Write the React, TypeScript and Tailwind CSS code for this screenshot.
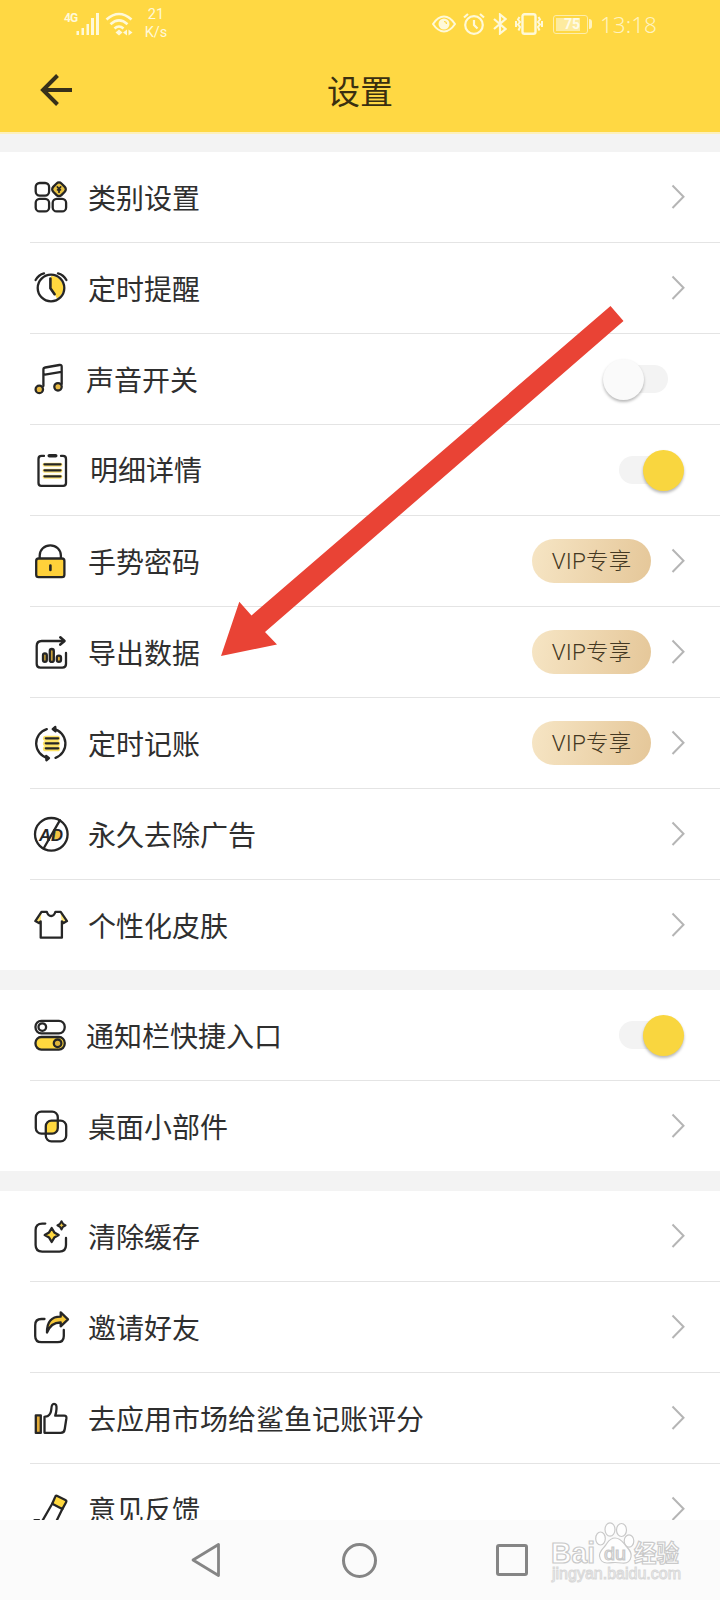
import React from 'react';

interface IconProps {
  children: React.ReactNode;
}

// 設定行の左側に置くアイコンの枠
const Icon = ({ children }: IconProps) => {
  return (
    <svg
      viewBox="0 0 40 40"
      className="w-10 h-10 shrink-0"
      fill="none"
      stroke="#262626"
      strokeWidth="2.3"
      strokeLinecap="round"
      strokeLinejoin="round"
    >
      {children}
    </svg>
  );
};

const CategoryIcon = () => (
  <Icon>
    <rect x="5.7" y="6" width="13.4" height="12.6" rx="4" />
    <rect x="5.7" y="21.8" width="13.4" height="12.6" rx="4" />
    <rect x="22.7" y="21.8" width="13.4" height="12.6" rx="4" />
    <rect
      x="23.2"
      y="6.5"
      width="11.6"
      height="11.6"
      rx="3.4"
      fill="#e9c343"
      transform="rotate(45 29 12.3)"
    />
    <path d="M27.4 10l1.6 1.8 1.6-1.8M29 11.8v3.4M27.6 12.8h2.8" strokeWidth="1.8" />
  </Icon>
);

const AlarmIcon = () => (
  <Icon>
    <path d="M21 8a12 12 0 0 1 6 22.6L21 20z" fill="#ffd83f" stroke="none" />
    <circle cx="21" cy="20" r="13.3" />
    <path d="M20.4 10.6v9.6l4.2 6" strokeWidth="2.6" />
    <path d="M5.6 12c2-3.6 4.8-5.8 8.4-6.7M28 5.3c3.6.9 6.4 3.1 8.4 6.7" />
  </Icon>
);

const MusicIcon = () => (
  <Icon>
    <path d="M13.4 27V10.6q0-1.8 1.8-2.1l14.2-2.5q2.3-.4 2.3 1.7V25M13.4 15.8l18-3" />
    <circle cx="9.3" cy="30.4" r="3.7" fill="#e9bb45" />
    <circle cx="28" cy="27.8" r="3.7" fill="#e9bb45" />
  </Icon>
);

const DetailIcon = () => (
  <Icon>
    <path d="M14.5 14.8h16M14.5 20.8h16M14.5 26.8h16" stroke="#ffe477" strokeWidth="4" />
    <path d="M14.5 14.3h16M14.5 20.3h16M14.5 26.3h16" />
    <path d="M14 5.9h-2.5Q8.5 5.9 8.5 8.9V33.1q0 2.8 2.8 2.8H33.2q2.8 0 2.8-2.8V8.9q0-3-3-3H31" />
    <path d="M19.3 5.7h6.4" strokeWidth="3.6" />
  </Icon>
);

const LockIcon = () => (
  <Icon>
    <path d="M9.7 17.5V14.5a10.6 10.2 0 0 1 21.2 0V17.5" />
    <rect x="6.2" y="17.5" width="28.2" height="18.6" rx="2.4" fill="#ffd13a" />
    <path d="M20.4 24.5v4.5" strokeWidth="2.6" />
  </Icon>
);

const ExportIcon = () => (
  <Icon>
    <path d="M36 21v11q0 3.6-3.6 3.6H10.3Q6.7 35.6 6.7 32V14q0-5 5-5H34" />
    <path d="M30.3 5.3l4.2 3.7-4.2 3.6" strokeWidth="2.6" />
    <rect x="13" y="21.3" width="3.8" height="8.6" rx="1.9" fill="#c89f38" />
    <rect x="19.8" y="17" width="4" height="12.9" rx="2" fill="#c89f38" />
    <rect x="26.8" y="23.6" width="4.2" height="6.3" rx="2.1" fill="#e0b040" />
  </Icon>
);

const AutoRecordIcon = () => (
  <Icon>
    <path d="M15.5 15.3h12M15.5 20.5h12M15.5 25.7h12" stroke="#ffe466" strokeWidth="5.2" />
    <path d="M15.8 15.3h12.4M15.8 20.3h12.4M15.8 25.3h12.4" />
    <path d="M16.8 6.1A15 15 0 0 0 17.5 35M25.5 34.8A15 15 0 0 0 23.5 6" />
    <path d="M25.3 4l-2.6 2.1 2.8 2.2zM16.2 33l2.8 2.1-2.6 2.2z" fill="#262626" />
  </Icon>
);

const NoAdIcon = () => (
  <Icon>
    <path d="M25.5 16h3.500q2.5 1 1.8 4.500-.7 4.500-4 4.500h-3.500z" fill="#f4c542" stroke="none" />
    <circle cx="21.3" cy="20.3" r="16.3" />
    <text
      x="9"
      y="26.6"
      textLength="24"
      lengthAdjust="spacingAndGlyphs"
      fill="#262626"
      stroke="none"
      className="font-['Liberation_Sans'] text-[17px] font-bold italic"
    >
      AD
    </text>
    <path d="M27.2 17.3h1.600q1.500.5 1 3.200-.6 3.200-2.600 3.400h-1.400z" fill="#f4c542" stroke="none" />
    <path d="M30 6.200L13.600 34.500" />
  </Icon>
);

const ShirtIcon = () => (
  <Icon>
    <path d="M11.5 7.5L6.5 16l4 2zM30.5 7.5L36 16l-4 2z" fill="#ffe477" stroke="none" />
    <path d="M11.5 6.8h5.3q1.2 4.2 4.3 4.2t4.3-4.2h5.3l6.3 9.3-3.4 2-1.700-1.700V32.700H10.700V16.400L8.900 18.100 5.300 16.100z" />
  </Icon>
);

const SwitchIcon = () => (
  <Icon>
    <rect x="5.5" y="5.8" width="29.2" height="12.6" rx="5.8" />
    <circle cx="12.3" cy="12.1" r="3.8" />
    <rect x="5.5" y="22" width="29.2" height="12.6" rx="5.8" fill="#ffd83f" />
    <circle cx="27.6" cy="28.3" r="3.8" fill="#dfb43c" />
  </Icon>
);

const WidgetIcon = () => (
  <Icon>
    <path d="M22 14.600h5.800v7.400q0 5.600-5.600 5.600h-6.400v-7q0-6 6.200-6z" fill="#ffd83f" stroke="none" />
    <rect x="5.8" y="5.600" width="22" height="22" rx="5.600" />
    <rect x="15.8" y="14.600" width="20.4" height="20.8" rx="5.600" />
  </Icon>
);

const CleanIcon = () => (
  <Icon>
    <path d="M15.3 7.6h-3q-6.700 0-6.700 6.500V29q0 6.600 6.600 6.600H29.500q6.500 0 6.500-6.600V22" />
    <path d="M21.7 12l2.600 4.400 4.400 2.600-4.400 2.600-2.600 4.400-2.600-4.400-4.400-2.600 4.400-2.600z" fill="#ffd83f" />
    <path d="M31.5 5.200l1.500 2.600 2.600 1.500-2.600 1.500-1.500 2.600-1.500-2.600-2.600-1.500 2.600-1.500z" fill="#e9c343" strokeWidth="2" />
  </Icon>
);

const ShareIcon = () => (
  <Icon>
    <path d="M14.500 12h-3.100q-6.200 0-6.200 6.200V29q0 6.200 6.200 6.200H27.600q6.200 0 6.200-6.200V23" />
    <path d="M17 25.500Q16.800 9.500 30.700 9.700V5.300l7.300 7-7.300 7V15.500Q21 15.300 17 25.500z" fill="#f6c83a" />
  </Icon>
);

const LikeIcon = () => (
  <Icon>
    <rect x="5.800" y="17.300" width="5" height="17.600" fill="#e3ac39" />
    <path d="M14.500 34.800V18.800l3-.6q3.500-2.200 3.800-7 .2-5.400 2.700-5.400 2.900 0 2.500 5.200-.2 3.600-1.300 6.600h9q2.500 0 2.200 2.600l-1.700 11q-.5 3.600-4 3.600z" />
  </Icon>
);

const FeedbackIcon = () => (
  <Icon>
    <path d="M26.800 6.700l8.600 4.300q1.500.8.700 2.200l-3.800 6.900-10.100-5.300 3.200-7.400q.4-1.100 1.400-.7z" fill="#ffd83f" />
    <path d="M22.200 14.800L12 32.500M32.300 20.100L25.500 34" />
    <path d="M4.500 31.200h4.500" />
  </Icon>
);

const Chevron = () => {
  return (
    <svg
      viewBox="0 0 14 26"
      className="w-[14px] h-[26px] shrink-0"
      fill="none"
      stroke="#b5b5b5"
      strokeWidth="2"
    >
      <path d="M1.5 1.500L12.500 12.700L1.500 24" />
    </svg>
  );
};

const Toggle = ({ on }: { on: boolean }) => {
  if (on) {
    return (
      <div className="flex items-center w-[65px] h-10 mr-px">
        <div className="w-[45px] h-7 rounded-l-full bg-[#f3f3f3]" />
        <div className="-ml-[21px] w-[41px] h-[41px] shrink-0 rounded-full bg-[#f9d63f] shadow-[0_2px_3px_rgba(0,0,0,0.28)]" />
      </div>
    );
  }
  return (
    <div className="flex items-center w-[65px] h-10 mr-[17px]">
      <div className="z-1 w-[41px] h-[41px] shrink-0 rounded-full bg-[#fafafa] shadow-[0_2px_3px_rgba(0,0,0,0.28)]" />
      <div className="-ml-[21px] w-[45px] h-7 rounded-r-full bg-[#f3f3f3]" />
    </div>
  );
};

const VipBadge = () => {
  return (
    <div className="flex items-center justify-center w-[119px] h-11 mr-5 rounded-full bg-linear-100 from-[#f6e5c4] to-[#e5c799] font-[Roboto,'Noto_Sans_CJK_SC',sans-serif] font-light text-[22.5px] leading-none tracking-[0.2px] text-[#443822]">
      VIP专享
    </div>
  );
};

interface SettingItem {
  label: string;
  icon: React.ReactNode;
  vip?: boolean;
  toggle?: boolean;
  // アイコンと文字の間隔が違う行用
  gap?: string;
}

const sections: SettingItem[][] = [
  [
    { label: '类别设置', icon: <CategoryIcon /> },
    { label: '定时提醒', icon: <AlarmIcon /> },
    { label: '声音开关', icon: <MusicIcon />, toggle: false, gap: 'pl-4' },
    { label: '明细详情', icon: <DetailIcon />, toggle: true, gap: 'pl-5 pb-0.5' },
    { label: '手势密码', icon: <LockIcon />, vip: true },
    { label: '导出数据', icon: <ExportIcon />, vip: true },
    { label: '定时记账', icon: <AutoRecordIcon />, vip: true },
    { label: '永久去除广告', icon: <NoAdIcon /> },
    { label: '个性化皮肤', icon: <ShirtIcon /> },
  ],
  [
    { label: '通知栏快捷入口', icon: <SwitchIcon />, toggle: true, gap: 'pl-4' },
    { label: '桌面小部件', icon: <WidgetIcon /> },
  ],
  [
    { label: '清除缓存', icon: <CleanIcon /> },
    { label: '邀请好友', icon: <ShareIcon /> },
    { label: '去应用市场给鲨鱼记账评分', icon: <LikeIcon /> },
    { label: '意见反馈', icon: <FeedbackIcon /> },
  ],
];

const SettingRow = ({ item }: { item: SettingItem }) => {
  return (
    <div className="flex items-center box-content h-[90px] ml-[30px] pr-[35px] border-b border-[#e4e4e4] last:border-b-0">
      {item.icon}
      <span
        className={`flex-1 text-[28px] leading-10 text-[#2f2f2f] whitespace-nowrap ${item.gap ?? 'pl-[18px]'}`}
      >
        {item.label}
      </span>
      {item.vip && <VipBadge />}
      {item.toggle === undefined ? <Chevron /> : <Toggle on={item.toggle} />}
    </div>
  );
};

const StatusBar = () => {
  return (
    <div className="flex items-center h-12 pl-16 pr-[65px] text-[#fff9d8]">
      <span className="self-start mt-[11px] w-3 font-[Roboto,sans-serif] text-[12px] leading-[14px] font-bold tracking-[-0.8px]">
        4G
      </span>
      <svg viewBox="0 0 24 22" className="w-6 h-[22px]" fill="currentColor">
        <path d="M.5 18H3v4H.5zM5.500 15H8v7H5.500zM10.500 11H13v11h-2.500zM15 5h3v17h-3zM20 0h3v22h-3z" />
      </svg>
      <svg
        viewBox="0 0 28 24"
        className="w-7 h-6 ml-[5px]"
        fill="none"
        stroke="currentColor"
        strokeWidth="2.6"
      >
        <path d="M1.500 7.500Q14-3.500 26.500 7.500M5.500 12.200Q14 4.500 22.500 12.200M9.500 16.500Q14 12.500 18.500 16.500" />
        <path d="M14 17.500l3.500 3-3.500 3-3.500-3zM22 17.500v6l-4-3zM23.500 17.500v6l4-3z" fill="currentColor" stroke="none" />
      </svg>
      <div className="w-[26px] ml-2.5 text-center font-[Roboto,sans-serif] text-[14.5px] leading-[18px]">
        <div>21</div>
        <div>K/s</div>
      </div>
      <div className="flex items-center ml-auto">
        <svg viewBox="0 0 24 20" className="w-6 h-5" fill="none" stroke="currentColor" strokeWidth="2">
          <path d="M1 10Q6 2.500 12 2.500T23 10Q18 17.500 12 17.500T1 10z" />
          <circle cx="12" cy="10" r="5.500" fill="currentColor" stroke="none" />
          <path d="M12 7.500a2.500 2.500 0 0 1 2.500 2.500" stroke="#ffd843" strokeWidth="1.2" />
        </svg>
        <svg viewBox="0 0 22 22" className="w-[22px] h-[22px] ml-[7px]" fill="none" stroke="currentColor" strokeWidth="2.2">
          <circle cx="11" cy="12" r="8.800" />
          <path d="M11 7v5l3.500 3.500M1 4.500l4-3.500M21 4.500L17 1" />
        </svg>
        <svg viewBox="0 0 14 22" className="w-3.5 h-[22px] ml-2" fill="none" stroke="currentColor" strokeWidth="2.2">
          <path d="M1 6l11.500 10L7 20.500v-19L12.500 6 1 16" />
        </svg>
        <svg viewBox="0 0 28 22" className="w-7 h-[22px] ml-2" fill="none" stroke="currentColor" strokeWidth="2">
          <rect x="7.500" y="1.200" width="13" height="19.600" rx="2" strokeWidth="2.400" />
          <path d="M4.500 4L3 6.500l2 2.500-2 2.500 2 2.500-1.500 3.500M1 8v6M23.500 4L25 6.500 23 9l2 2.500-2 2.500 1.500 3.500M27 8v6" />
        </svg>
        <div className="flex items-center w-[35px] h-[19px] ml-[10px] p-[2px] border border-[#fdedaa] rounded-[3px]">
          <div className="flex items-center justify-center w-[24px] h-full pl-2 bg-[#fdeb9f] font-[Roboto,sans-serif] text-[14px] leading-none font-bold text-[#fffbe6]">
            75
          </div>
        </div>
        <div className="w-[3px] h-2.5 ml-px bg-[#fff3c0] rounded-r-sm" />
        <span className="w-[55px] ml-[8px] mt-0.5 font-['Noto_Sans',sans-serif] font-light text-[22.5px] leading-6 text-[#fff3bf]">
          13:18
        </span>
      </div>
    </div>
  );
};

const Header = () => {
  return (
    <header className="h-[134px] bg-[#ffd843] border-b-2 border-[#fdf0bb]">
      <StatusBar />
      <div className="flex items-center h-[84px] pl-10 pr-10">
        <svg viewBox="0 0 32 32" className="w-8 h-8" fill="none" stroke="#37301a" strokeWidth="4">
          <path d="M17.500 1.500L3 16l14.500 14.500M2.500 16H32" />
        </svg>
        <h1 className="flex-1 pr-8 text-center text-[33px] leading-10 text-[#3a2f10]">
          设置
        </h1>
      </div>
    </header>
  );
};

const NavigationBar = () => {
  return (
    <nav className="flex items-center h-20 shrink-0 pl-[190px] bg-[#fbfbfb]">
      <svg viewBox="0 0 32 36" className="w-8 h-9" fill="none" stroke="#858585" strokeWidth="2.8" strokeLinejoin="round">
        <path d="M28.500 2.500V33.500L3 18z" />
      </svg>
      <div className="w-[35px] h-[35px] ml-[120px] rounded-full border-3 border-[#858585]" />
      <div className="w-8 h-8 ml-[119px] rounded-[3px] border-3 border-[#858585]" />
    </nav>
  );
};

// データのエクスポートを指す赤い矢印
const PointerArrow = () => {
  return (
    <svg viewBox="0 0 410 360" className="absolute left-[217px] top-[300px] w-[410px] h-[360px]">
      <path
        d="M393.500 6L406.500 21L48 332L60 344.500L4 356L22.300 301.700L34.500 315.500z"
        fill="#e94335"
      />
    </svg>
  );
};

const Watermark = () => {
  return (
    <svg
      viewBox="0 0 136 66"
      className="absolute left-[549px] top-[1520px] w-[136px] h-[66px] font-['Liberation_Sans','Noto_Sans_CJK_SC',sans-serif]"
      fill="#fefefe"
      stroke="#c9c9c9"
      strokeWidth="1.2"
    >
      <text x="2" y="42.500" textLength="44" lengthAdjust="spacingAndGlyphs" className="text-[29px] font-bold">
        Bai
      </text>
      <ellipse cx="51.500" cy="18.500" rx="4.800" ry="6.500" />
      <ellipse cx="61" cy="9.500" rx="5" ry="6.700" />
      <ellipse cx="72.500" cy="10" rx="5" ry="6.500" />
      <ellipse cx="80" cy="21" rx="4.800" ry="6.200" />
      <path d="M66 18c6 0 8 4.500 11 8s6 6 5 11-5 6.500-9 6-5-.5-7-.5-4 .5-8 .5-7-3-7.500-7 2.500-6.500 5.500-10S60 18 66 18z" />
      <text x="55" y="39.500" textLength="22" lengthAdjust="spacingAndGlyphs" className="text-[19px]">
        du
      </text>
      <text x="85" y="41.500" textLength="45" lengthAdjust="spacingAndGlyphs" className="text-[24px] font-bold">
        经验
      </text>
      <text x="3" y="59" textLength="129" lengthAdjust="spacingAndGlyphs" stroke="#d8d8d8" strokeWidth="1" className="text-[16px]">
        jingyan.baidu.com
      </text>
    </svg>
  );
};

const App = () => {
  return (
    <div className="relative flex flex-col w-[720px] h-[1600px] overflow-hidden bg-[#f3f3f3] font-['Noto_Sans_CJK_SC',sans-serif]">
      <Header />
      <main className="flex flex-col flex-1 gap-5 min-h-0 pt-[18px] overflow-hidden">
        {sections.map((items, index) => (
          <section className="shrink-0 bg-white" key={index}>
            {items.map((item) => (
              <SettingRow item={item} key={item.label} />
            ))}
          </section>
        ))}
      </main>
      <NavigationBar />
      <PointerArrow />
      <Watermark />
    </div>
  );
};

export default App;
